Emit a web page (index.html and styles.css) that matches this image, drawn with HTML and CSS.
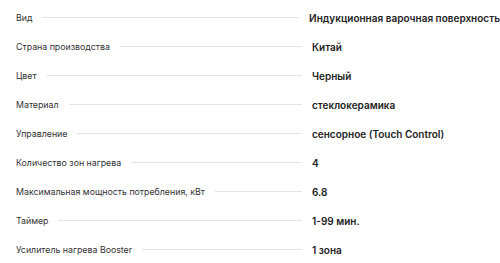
FILE: index.html
```html
<!DOCTYPE html>
<html lang="ru">
<head>
    <meta charset="UTF-8">
    <meta name="viewport" content="width=device-width, initial-scale=1.0">
    <title>Характеристики</title>
    <link rel="stylesheet" href="styles.css">
</head>
<body>
    <div class="specs">
        <div class="spec-row">
            <div class="spec-name">Вид</div>
            <div class="spec-value">Индукционная варочная поверхность</div>
        </div>
        <div class="spec-row">
            <div class="spec-name">Страна производства</div>
            <div class="spec-value">Китай</div>
        </div>
        <div class="spec-row">
            <div class="spec-name">Цвет</div>
            <div class="spec-value">Черный</div>
        </div>
        <div class="spec-row">
            <div class="spec-name">Материал</div>
            <div class="spec-value">стеклокерамика</div>
        </div>
        <div class="spec-row">
            <div class="spec-name">Управление</div>
            <div class="spec-value">сенсорное (Touch Control)</div>
        </div>
        <div class="spec-row">
            <div class="spec-name">Количество зон нагрева</div>
            <div class="spec-value">4</div>
        </div>
        <div class="spec-row">
            <div class="spec-name">Максимальная мощность потребления, кВт</div>
            <div class="spec-value">6.8</div>
        </div>
        <div class="spec-row">
            <div class="spec-name">Таймер</div>
            <div class="spec-value">1-99 мин.</div>
        </div>
        <div class="spec-row">
            <div class="spec-name">Усилитель нагрева Booster</div>
            <div class="spec-value">1 зона</div>
        </div>
    </div>
</body>
</html>
```

FILE: styles.css
```css
body {
    font-family: Inter, "Noto Sans", sans-serif;
    margin: 0;
    padding: 0;
    background-color: #fff;
    overflow: hidden;
}

.specs {
    padding: 3px 0 0 16px;
}

.spec-row {
    display: flex;
    align-items: center;
    height: 29px;
}

.spec-name {
    width: 286px;
    display: flex;
    align-items: center;
    font-size: 8.8px;
    color: #333;
    white-space: nowrap;
}

/* thin grey rule running from the label to the value */
.spec-name::after {
    content: '';
    flex: 1;
    height: 1px;
    margin-left: 10px;
    background-color: #e3e3e3;
}

.spec-value {
    margin-left: 10px;
    font-size: 10px;
    font-weight: 600;
    color: #222;
    white-space: nowrap;
}
```
